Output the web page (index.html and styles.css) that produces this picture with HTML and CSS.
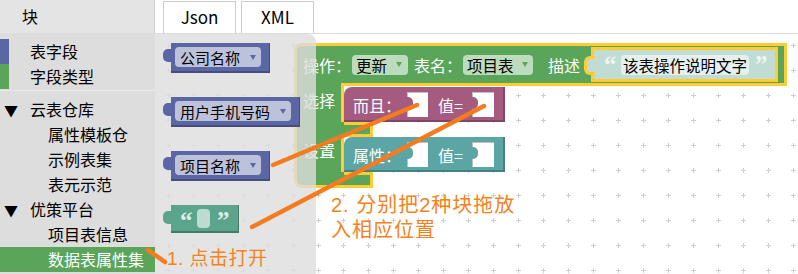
FILE: index.html
```html
<!DOCTYPE html>
<html lang="zh-CN">
<head>
<meta charset="utf-8">
<title>Blockly 表设计</title>
<link rel="stylesheet" href="styles.css">
</head>
<body>
<div class="app">
  <header class="topbar">
    <div class="pane-title">块</div>
    <nav class="tabs">
      <div class="tab">Json</div>
      <div class="tab">XML</div>
    </nav>
  </header>
  <div class="body">
    <aside class="toolbox">
      <div class="cat cat-blue">表字段</div>
      <div class="cat cat-green">字段类型</div>
      <div class="sep"></div>
      <div class="cat folder"><span class="caret">▼</span>云表仓库</div>
      <div class="cat sub">属性模板仓</div>
      <div class="cat sub">示例表集</div>
      <div class="cat sub">表元示范</div>
      <div class="cat folder"><span class="caret">▼</span>优策平台</div>
      <div class="cat sub">项目表信息</div>
      <div class="cat sub selected">数据表属性集</div>
    </aside>
    <main class="workspace">
      <svg class="grid" width="643" height="240">
        <defs>
          <pattern id="gridp" x="11" y="9" width="25" height="25" patternUnits="userSpaceOnUse">
            <path d="M0 2.5H5M2.5 0V5" stroke="#cfcfcf" stroke-width="1"/>
          </pattern>
        </defs>
        <rect width="643" height="240" fill="url(#gridp)"/>
      </svg>

      <div class="blk-main">
        <div class="main-head">
          <span class="lbl">操作：</span>
          <span class="dd dd-green dd-w56">更新<i class="arr"></i></span>
          <span class="lbl ml6">表名：</span>
          <span class="dd dd-green dd-w70">项目表<i class="arr"></i></span>
          <span class="lbl ml15">描述</span>
          <span class="txt-shadow"><span class="qt">“</span><span class="tfield">该表操作说明文字</span><span class="qt">”</span></span>
        </div>
        <div class="stmt stmt-first">
          <div class="arm">选择</div>
          <div class="sblk purple">
            <span class="lbl">而且：</span>
            <span class="slot"></span>
            <span class="lbl eq">值=</span>
            <span class="slot slot2"></span>
          </div>
        </div>
        <div class="gap"></div>
        <div class="stmt stmt-second">
          <div class="arm">设置</div>
          <div class="sblk teal">
            <span class="lbl">属性：</span>
            <span class="slot"></span>
            <span class="lbl eq">值=</span>
            <span class="slot slot2"></span>
          </div>
        </div>
        <div class="foot"></div>
      </div>

      <div class="flyout">
        <div class="fblk blue"><span class="dd dd-blue">公司名称<i class="arr"></i></span></div>
        <div class="fblk blue"><span class="dd dd-blue">用户手机号码<i class="arr"></i></span></div>
        <div class="fblk blue"><span class="dd dd-blue">项目名称<i class="arr"></i></span></div>
        <div class="fblk textblk"><span class="qt">“</span><span class="tfield empty"></span><span class="qt">”</span></div>
      </div>
    </main>
  </div>

  <svg class="annot" width="798" height="274">
    <g stroke="#f47b20" stroke-width="4.5" stroke-linecap="round">
      <line x1="148" y1="250" x2="165" y2="262"/>
      <line x1="273" y1="165" x2="417" y2="105"/>
      <line x1="252" y1="227" x2="484" y2="106"/>
    </g>
  </svg>
  <div class="note note1">1. 点击打开</div>
  <div class="note note2"><div class="nl">2. 分别把2种块拖放</div><div class="nl">入相应位置</div></div>
</div>
</body>
</html>
```
FILE: styles.css
```css
* { box-sizing: border-box; margin: 0; padding: 0; }
html, body { width: 798px; height: 274px; overflow: hidden; background: #fff; }
body {
  font-family: "Noto Sans CJK SC", "Noto Sans", sans-serif;
  font-size: 16px;
  color: #000;
}
.app { position: relative; width: 798px; height: 274px; }

/* top bar */
.topbar { display: flex; height: 34px; border-bottom: 1px solid #ddd; }
.pane-title {
  width: 155px;
  background: #e4e4e4;
  border-right: 1px solid #ccc;
  padding-left: 22px;
  line-height: 33px;
}
.tabs { display: flex; gap: 5px; padding-left: 8px; align-items: flex-end; }
.tab {
  width: 73px;
  height: 32px;
  border: 1px solid #ccc;
  border-bottom: none;
  background: #fff;
  text-align: center;
  line-height: 30px;
  font-size: 17px;
}

/* body */
.body { display: flex; height: 240px; }

/* toolbox */
.toolbox { width: 155px; background: #ddd; padding-top: 5px; }
.cat { height: 25px; line-height: 25px; padding-left: 30px; white-space: nowrap; }
.cat-blue { border-left: 9px solid #5b67a5; padding-left: 21px; }
.cat-green { border-left: 9px solid #5ba55b; padding-left: 21px; }
.sep { height: 1px; background: #eaeaea; margin: 1px 0 6px; }
.folder { padding-left: 4px; }
.caret { display: inline-block; width: 26px; font-size: 14px; }
.sub { padding-left: 48px; }
.selected { background: #5ba55b; color: #fff; }

/* workspace */
.workspace { position: relative; flex: 1; overflow: hidden; background: #fff; }
.grid { position: absolute; left: 0; top: 0; }

.lbl { line-height: 20px; color: #fff; white-space: nowrap; }
.ml6 { margin-left: 6px; }
.ml15 { margin-left: 15px; }

.dd {
  display: inline-flex;
  align-items: center;
  justify-content: space-between;
  height: 20px;
  border-radius: 4px;
  padding: 0 6px 0 4px;
  font-size: 15.5px;
  color: #000;
  white-space: nowrap;
}
.dd .arr {
  display: inline-block;
  width: 0; height: 0;
  border-left: 3.5px solid transparent;
  border-right: 3.5px solid transparent;
  border-top: 5px solid #5ba55b;
  margin-left: 8px;
}
.dd-green { background: #bddbbd; margin-left: 1px; }
.dd-w56 { width: 56px; }
.dd-w70 { width: 70px; }
.dd-blue { background: #bdc2db; font-size: 15px; padding: 0 5px 0 5px; }
.dd-blue .arr { border-top-color: #5b67a5; margin-left: 10px; }

/* main block */
.blk-main { position: absolute; left: 139px; top: 9px; width: 493px; }
.main-head {
  display: flex;
  align-items: center;
  height: 43px;
  padding-left: 6px;
  background: #5ba55b;
  border: 3px solid #fc3;
  border-radius: 8px 0 0 0;
}
.txt-shadow {
  position: relative;
  display: flex;
  align-items: center;
  width: 187px;
  height: 35px;
  margin-left: 11px;
  padding: 0 12px 0 10px;
  background: #c0dcd4;
  border: 3px solid #fc3;
}
.txt-shadow::before {
  content: "";
  position: absolute;
  left: -10px; top: 6px;
  width: 8px; height: 13px;
  background: #c0dcd4;
  border: 3px solid #fc3;
  border-right: none;
  border-radius: 6px 0 0 6px;
}
.qt {
  align-self: flex-start;
  width: 10px;
  height: 20px;
  margin-top: 5px;
  text-align: center;
  font-family: "Liberation Serif", serif;
  font-weight: bold;
  font-size: 25px;
  line-height: 20px;
  color: #eef6f3;
}
.tfield {
  height: 20px;
  line-height: 20px;
  margin: 0 6px 0 7px;
  padding: 0 2px;
  background: #e5f0ec;
  border-radius: 4px;
  font-size: 15.5px;
  white-space: nowrap;
}

.stmt { display: flex; align-items: flex-start; }
.stmt-first { margin-top: -3px; height: 39px; }
.stmt-second { height: 35px; }
.arm {
  width: 50px;
  height: 100%;
  background: #5ba55b;
  border-left: 3px solid #fc3;
  border-right: 3px solid #fc3;
  padding-left: 6px;
  color: #fff;
  line-height: 20px;
}
.stmt-first .arm { padding-top: 7px; }
.stmt-second .arm { padding-top: 3px; }

.sblk {
  display: flex;
  align-items: center;
  width: 161px;
  height: 35px;
  padding-left: 9px;
  border-radius: 8px 0 0 0;
  box-shadow: inset -2px -2px 0 rgba(0,0,0,0.22);
}
.stmt-first .sblk { margin-top: 4px; }
.purple { background: #a55b80; --c: #a55b80; }
.teal { background: #5ba5a5; --c: #5ba5a5; }
.slot {
  position: relative;
  width: 21px;
  height: 25px;
  margin-left: 6px;
  background: #fff;
  box-shadow: inset 1px 1px 0 rgba(0,0,0,0.25);
}
.slot::before {
  content: "";
  position: absolute;
  left: 0; top: 5px;
  width: 6px; height: 12px;
  background: var(--c);
  border-radius: 0 5px 5px 0;
}
.slot2 { width: 22px; margin-left: 9px; }
.eq { margin-left: 10px; }

.gap {
  width: 79px;
  height: 15px;
  border-left: 3px solid #fc3;
  border-right: 3px solid #fc3;
  background:
    linear-gradient(#fc3, #fc3) 47px 0 / 26px 3px no-repeat,
    linear-gradient(#fc3, #fc3) 47px 12px / 26px 3px no-repeat,
    #5ba55b;
}
.foot {
  width: 79px;
  height: 16px;
  border: 3px solid #fc3;
  border-top: none;
  border-bottom-left-radius: 8px;
  background:
    linear-gradient(#fc3, #fc3) 47px 0 / 26px 3px no-repeat,
    #5ba55b;
}

/* flyout */
.flyout {
  position: absolute;
  left: 0; top: 0;
  width: 161px;
  height: 100%;
  background: rgba(221,221,221,0.8);
  border-top-right-radius: 8px;
  display: flex;
  flex-direction: column;
  align-items: flex-start;
  gap: 24px;
  padding: 9px 0 0 8px;
}
.fblk {
  position: relative;
  display: flex;
  align-items: center;
  height: 30px;
  margin-left: 8px;
  padding: 0 9px 2px 4px;
  box-shadow: inset -1px -2px 0 rgba(0,0,0,0.25);
}
.fblk::before {
  content: "";
  position: absolute;
  left: -8px; top: 6px;
  width: 8px; height: 13px;
  background: inherit;
  border-radius: 5px 0 0 5px;
}
.blue { background: #5b67a5; }
.textblk { background: #5ba58c; height: 28px; width: 68px; padding: 0 0 2px 9px; }
.textblk .qt { color: #dcede6; width: 11px; margin-top: 6px; }
.tfield.empty { width: 13px; height: 19px; margin: 0 7px 0 6px; padding: 0; background: #bddbd1; }

/* annotations */
.annot { position: absolute; left: 0; top: 0; pointer-events: none; }
.note {
  position: absolute;
  color: #f58220;
  white-space: nowrap;
  font-family: "Liberation Sans", "Noto Sans CJK SC", sans-serif;
}
.note1 { left: 167px; top: 248px; font-size: 19px; line-height: 22px; letter-spacing: 0.5px; }
.note2 { left: 331px; top: 193px; font-size: 20px; letter-spacing: 1px; }
.nl { height: 25px; line-height: 25px; }
```
